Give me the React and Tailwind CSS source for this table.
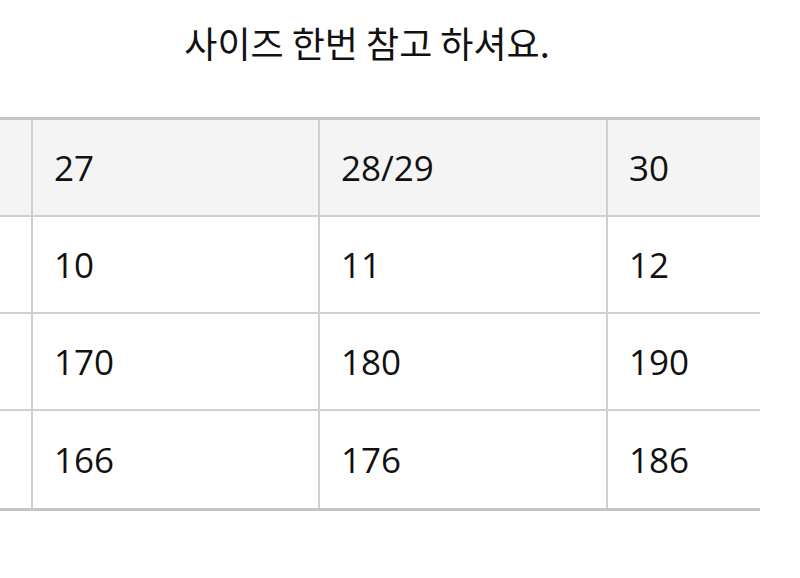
const rows = [
  ["27", "28/29", "30"],
  ["10", "11", "12"],
  ["170", "180", "190"],
  ["166", "176", "186"],
];

function Row({ cells, header, last }) {
  return (
    <div
      className={`grid grid-cols-[33px_287px_288px_152px] h-[97px] ${
        header ? "bg-[#f4f4f4]" : "bg-white"
      } ${last ? "" : "border-b-2 border-[#d0d0d0]"}`}
    >
      <div className="border-r-2 border-[#cfcfcf]" />
      {cells.map((c, i) => (
        <div
          key={i}
          className={`flex items-center pl-[21px] ${
            i < 2 ? "border-r-2 border-[#cfcfcf]" : ""
          }`}
        >
          <span className="text-[35px] leading-none text-[#111]">{c}</span>
        </div>
      ))}
    </div>
  );
}

export default function App() {
  return (
    <div
      className="w-[800px] h-[578px] bg-white overflow-hidden"
      style={{ fontFamily: '"Open Sans", "Noto Sans CJK KR", sans-serif' }}
    >
      <div className="w-[734px] pt-[18px] h-[117px] text-center">
        <h1
          className="text-[36px] leading-[48px] text-[#111] font-normal"
          style={{ fontFamily: '"Noto Sans CJK KR", sans-serif' }}
        >
          사이즈 한번 참고 하셔요.
        </h1>
      </div>
      <div className="w-[760px] border-t-[3px] border-b-[3px] border-[#c6c6c6]">
        {rows.map((r, i) => (
          <Row key={i} cells={r} header={i === 0} last={i === rows.length - 1} />
        ))}
      </div>
    </div>
  );
}
